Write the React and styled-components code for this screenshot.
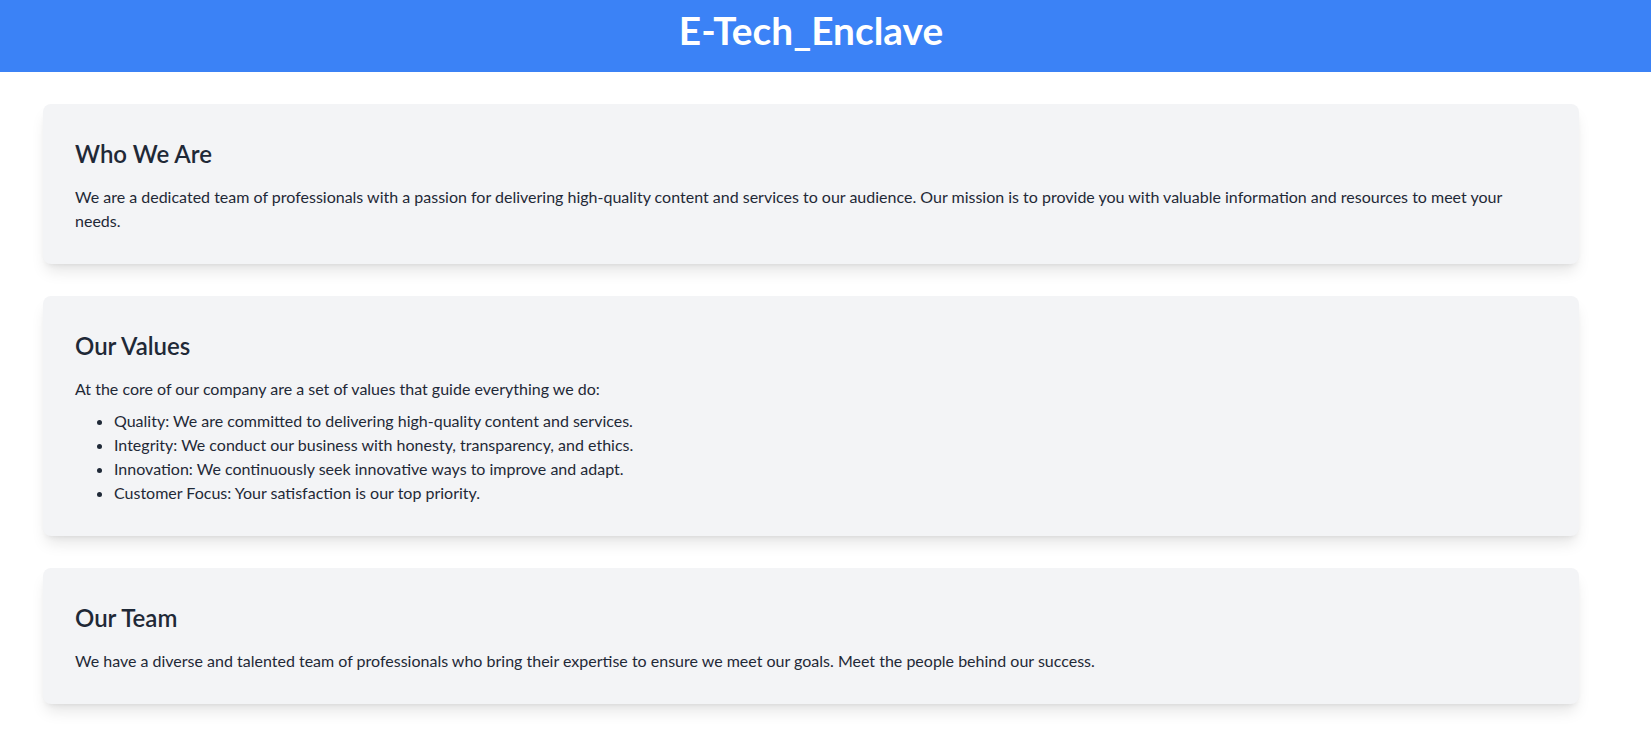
import React from "react";
import styled, { createGlobalStyle } from "styled-components";

const GlobalStyle = createGlobalStyle`
  body {
    margin: 0;
    font-family: Lato, "Noto Sans", sans-serif;
    background: #ffffff;
    color: #1f2937;
  }
  * { box-sizing: border-box; }
`;

const sections = [
  {
    title: "Who We Are",
    text: "We are a dedicated team of professionals with a passion for delivering high-quality content and services to our audience. Our mission is to provide you with valuable information and resources to meet your needs.",
  },
  {
    title: "Our Values",
    text: "At the core of our company are a set of values that guide everything we do:",
    items: [
      "Quality: We are committed to delivering high-quality content and services.",
      "Integrity: We conduct our business with honesty, transparency, and ethics.",
      "Innovation: We continuously seek innovative ways to improve and adapt.",
      "Customer Focus: Your satisfaction is our top priority.",
    ],
  },
  {
    title: "Our Team",
    text: "We have a diverse and talented team of professionals who bring their expertise to ensure we meet our goals. Meet the people behind our success.",
  },
];

const App = () => {
  return (
    <>
      <GlobalStyle />
      <Header>
        <Shell>
          <Title>E-Tech_Enclave</Title>
        </Shell>
      </Header>
      <Shell>
        <Container>
          {sections.map((s) => (
            <Card key={s.title}>
              <CardTitle>{s.title}</CardTitle>
              <CardText $tight={!!s.items}>{s.text}</CardText>
              {s.items && (
                <ValueList>
                  {s.items.map((item) => (
                    <li key={item}>{item}</li>
                  ))}
                </ValueList>
              )}
            </Card>
          ))}
        </Container>
      </Shell>
    </>
  );
};

const Header = styled.header`
  background-color: #3b82f6;
  color: #ffffff;
  padding: 10px 0 22px;
`;

const Shell = styled.div`
  width: 1622px;
`;

const Title = styled.h1`
  margin: 0;
  text-align: center;
  font-size: 38.8px;
  line-height: 40px;
  font-weight: 700;
`;

const Container = styled.main`
  max-width: 1536px;
  margin: 0 auto;
  padding-top: 32px;
`;

const Card = styled.section`
  background-color: #f3f4f6;
  border-radius: 8px;
  padding: 32px 32px 31px;
  margin-bottom: 32px;
  box-shadow: 0 10px 15px -3px rgba(0, 0, 0, 0.1), 0 4px 6px -4px rgba(0, 0, 0, 0.1);
`;

const CardTitle = styled.h2`
  margin: 0 0 15px;
  padding-top: 2px;
  font-size: 24px;
  line-height: 32px;
  font-weight: 600;
  color: #1f2937;
`;

const CardText = styled.p`
  margin: 0 0 ${(p) => (p.$tight ? "8px" : "0")};
  font-size: 16px;
  line-height: 24px;
  color: #1f2937;
`;

const ValueList = styled.ul`
  margin: 0;
  padding-left: 39px;
  list-style: disc;
  font-size: 16px;
  line-height: 24px;
  color: #1f2937;
`;

export default App;
